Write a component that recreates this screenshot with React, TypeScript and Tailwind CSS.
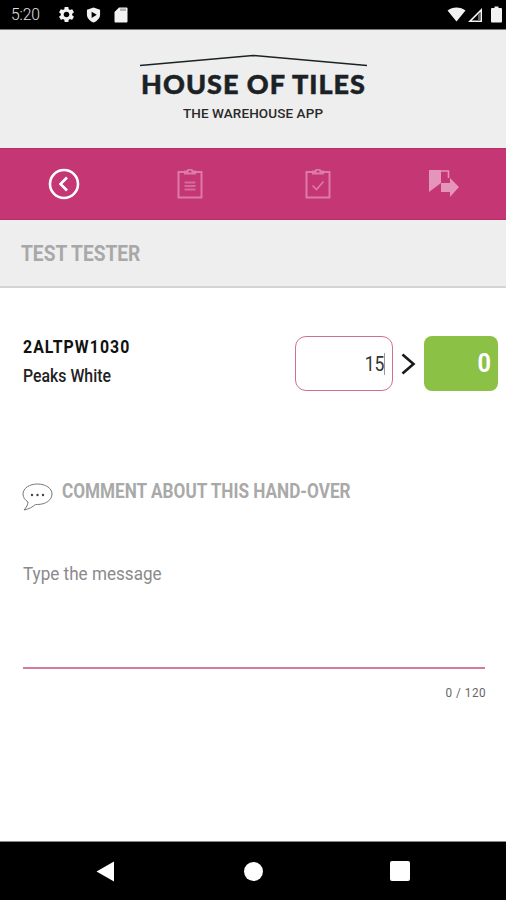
function StatusBar() {
  return (
    <div className="h-[30px] bg-black border-b border-[#777] flex items-center justify-between pl-[11px] pr-[4px] text-[#e0e0e0]">
      <div className="flex items-center">
        <span className="w-[32px] text-[17px] leading-none font-[Roboto] font-light tracking-[-0.1px] origin-left scale-x-[0.92]">5:20</span>
        {/* gear */}
        <svg width="19" height="19" viewBox="0 0 24 24" className="ml-[14px]">
          <path
            fill="#f2f2f2"
            d="M19.14 12.94c.04-.3.06-.61.06-.94 0-.32-.02-.64-.07-.94l2.03-1.58c.18-.14.23-.41.12-.61l-1.92-3.32c-.12-.22-.37-.29-.59-.22l-2.39.96c-.5-.38-1.03-.7-1.62-.94l-.36-2.54c-.04-.24-.24-.41-.48-.41h-3.84c-.24 0-.43.17-.47.41l-.36 2.54c-.59.24-1.13.57-1.62.94l-2.39-.96c-.22-.08-.47 0-.59.22L2.74 8.87c-.12.21-.08.47.12.61l2.03 1.58c-.05.3-.09.63-.09.94s.02.64.07.94l-2.03 1.58c-.18.14-.23.41-.12.61l1.92 3.32c.12.22.37.29.59.22l2.39-.96c.5.38 1.03.7 1.62.94l.36 2.54c.05.24.24.41.48.41h3.84c.24 0 .44-.17.47-.41l.36-2.54c.59-.24 1.13-.56 1.62-.94l2.39.96c.22.08.47 0 .59-.22l1.92-3.32c.12-.22.07-.47-.12-.61l-2.01-1.58zM12 15.6c-1.98 0-3.6-1.62-3.6-3.6s1.62-3.6 3.6-3.6 3.6 1.62 3.6 3.6-1.62 3.6-3.6 3.6z"
          />
        </svg>
        {/* play protect shield */}
        <svg width="15" height="16" viewBox="0 0 16 17" className="ml-[10px]">
          <path d="M8 0.5 L15 3 V8 C15 12 12 15 8 16.5 C4 15 1 12 1 8 V3 Z" fill="#f2f2f2" />
          <path d="M6 5 L11.5 8.3 L6 11.6 Z" fill="#000" />
        </svg>
        {/* sd card */}
        <svg width="14" height="16" viewBox="0 0 14 16" className="ml-[13px]">
          <path d="M5 0.5 H12.5 A1 1 0 0 1 13.5 1.5 V14.5 A1 1 0 0 1 12.5 15.5 H1.5 A1 1 0 0 1 0.5 14.5 V5 Z" fill="#f2f2f2" />
          <path d="M7 1.5 V4 M9 1.5 V4 M11 1.5 V4" stroke="#555" strokeWidth="0.8" />
        </svg>
      </div>
      <div className="flex items-center">
        <svg width="19" height="15" viewBox="0 0 19 15">
          <path d="M0.5 3.5 C5.5 -0.5 13.5 -0.5 18.5 3.5 L9.5 14.5 Z" fill="#f2f2f2" />
        </svg>
        <svg width="16" height="16" viewBox="0 0 16 16" className="ml-[1px]">
          <path d="M15 1 V15 H1 Z M13.4 5 L4.8 13.6 H13.4 Z" fill="#f2f2f2" fillRule="evenodd" />
          <path d="M11 8 V13.6 H13.4 V5 Z" fill="#666" />
        </svg>
        <svg width="11" height="17" viewBox="0 0 11 17" className="ml-[8px]">
          <path d="M3.5 0.5 H7.5 V2 H10 A1 1 0 0 1 11 3 V15.5 A1 1 0 0 1 10 16.5 H1 A1 1 0 0 1 0 15.5 V3 A1 1 0 0 1 1 2 H3.5 Z" fill="#f2f2f2" />
        </svg>
      </div>
    </div>
  );
}

function Logo() {
  return (
    <div className="h-[118px] bg-[#eeeeee] flex flex-col items-center">
      <svg width="230" height="14" viewBox="0 0 230 14" className="mt-[24px] ml-[2px]">
        <path d="M1 11.5 L114 1.5 L228 11.5" fill="none" stroke="#1b2226" strokeWidth="1.5" />
      </svg>
      <div className="mt-[1px] ml-[1px] text-[27px] leading-[30px] font-black font-[Lato] text-[#1b2226] tracking-[1px] whitespace-nowrap [-webkit-text-stroke:0.5px_#1b2226]">
        HOUSE OF TILES
      </div>
      <div className="mt-[6px] text-[13.5px] leading-[16px] font-medium font-[Roboto] text-[#2a2a2a] tracking-[0.1px] whitespace-nowrap">
        THE WAREHOUSE APP
      </div>
    </div>
  );
}

function ClipboardIcon({ done }: { done?: boolean }) {
  return (
    <svg width="26" height="30" viewBox="0 0 26 30" fill="none" stroke="#dd7ba8" strokeWidth="2">
      <path d="M8 3 H1.5 V28.5 H24.5 V3 H18" />
      <path d="M8 4.5 V2.5 H10.5 A2.5 2 0 0 1 15.5 2.5 H18 V4.5 Z" />
      {done ? (
        <path d="M7.5 16.5 L11.5 20.5 L18.5 12.5" strokeWidth="1.6" />
      ) : (
        <path d="M7.5 13.5 H18.5 M7.5 17 H18.5 M7.5 20.5 H18.5" strokeWidth="1.8" stroke="#d56a9c" />
      )}
    </svg>
  );
}

function StepBar() {
  return (
    <div className="h-[72px] bg-[#c43674] border-y border-[#bf2a6b] grid grid-cols-4 items-center">
      <div className="flex justify-center pl-[2px]">
        <svg width="32" height="32" viewBox="0 0 32 32" fill="none" stroke="#fff">
          <circle cx="16" cy="16" r="14" strokeWidth="2.6" />
          <path d="M19 9.5 L12.5 16 L19 22.5" strokeWidth="2.6" />
        </svg>
      </div>
      <div className="flex justify-center pl-[1px]">
        <ClipboardIcon />
      </div>
      <div className="flex justify-center pl-[3px]">
        <ClipboardIcon done />
      </div>
      <div className="flex justify-center pl-[3px]">
        <svg width="30" height="28" viewBox="0 0 30 28">
          <path d="M0 0 H12 V13 L0 22 Z" fill="#e594ba" />
          <path d="M12 1 H19.5 V8" fill="none" stroke="#e594ba" strokeWidth="1.6" />
          <path d="M12 13 H21 V8 L30 17 L21 27 V22 H12 Z" fill="#e594ba" />
        </svg>
      </div>
    </div>
  );
}

export default function App() {
  return (
    <div className="w-[506px] h-[900px] bg-white flex flex-col overflow-hidden font-[Roboto]">
      <StatusBar />
      <Logo />
      <StepBar />
      <div className="h-[68px] bg-[#eeeeee] border-b-2 border-[#d4d4d4] pl-[21px] pt-[21px]">
        <div className="text-[22px] leading-[26px] font-bold text-[#a8a8a8] origin-left scale-x-[0.87]">TEST TESTER</div>
      </div>

      <div className="flex-1 flex flex-col">
        {/* item row */}
        <div className="flex items-start justify-between pl-[23px] pr-[8px] mt-[48px]">
          <div>
            <div className="text-[18px] leading-[22px] font-bold text-[#111] tracking-[1.2px] origin-left scale-x-[0.88]">2ALTPW1030</div>
            <div className="mt-[8px] text-[18px] leading-[20px] font-medium text-[#222] origin-left scale-x-[0.88]">Peaks White</div>
          </div>
          <div className="flex items-center">
            <div className="w-[98px] h-[55px] rounded-[11px] border-[1.5px] border-[#d0708f] flex items-center justify-end pr-[7px]">
              <span className="text-[20px] leading-none text-[#333] origin-right scale-x-[0.88]">15</span>
              <span className="w-px h-[22px] bg-[#999]" />
            </div>
            <svg width="31" height="24" viewBox="0 0 31 24" fill="none" stroke="#1a1a1a" strokeWidth="2.6">
              <path d="M9.5 2.5 L20.5 12 L9.5 21.5" />
            </svg>
            <div className="w-[74px] h-[55px] rounded-[8px] bg-[#8bc145] flex items-center justify-end pr-[7px] text-[26px] font-bold text-white">
              <span className="origin-right scale-x-[0.9]">0</span>
            </div>
          </div>
        </div>

        {/* comment heading */}
        <div className="flex items-start pl-[22px] mt-[89px]">
          <svg width="31" height="28" viewBox="0 0 31 28" fill="none" stroke="#777" strokeWidth="1" className="mt-[3px]">
            <path d="M15.5 1 C7.5 1 1 5.2 1 11 C1 14.5 3 17 6 19 C6 21.5 4.5 24 2 27 C7 26 10.5 24 13.5 21.5 C14.2 21.5 14.8 21.5 15.5 21.5 C23.5 21.5 30 17 30 11 C30 5.2 23.5 1 15.5 1 Z" />
            <circle cx="10" cy="12" r="1.2" fill="#444" stroke="none" />
            <circle cx="15.5" cy="12" r="1.2" fill="#444" stroke="none" />
            <circle cx="21" cy="12" r="1.2" fill="#444" stroke="none" />
          </svg>
          <div className="ml-[9px] text-[19.5px] leading-[24px] font-bold text-[#a9a9a9] whitespace-nowrap origin-left scale-x-[0.88]">
            COMMENT ABOUT THIS HAND-OVER
          </div>
        </div>

        {/* message field */}
        <div className="ml-[23px] mr-[21px] mt-[51px] h-[107px] border-b-2 border-b-[#d8799f]">
          <div className="text-[19px] leading-[24px] text-[#8a8a8a] origin-left scale-x-[0.9]">Type the message</div>
        </div>
        <div className="mt-[16px] pr-[22px] text-right text-[13px] leading-[16px] text-[#666] tracking-[0.6px] origin-right scale-x-[0.9]">0 / 120</div>
      </div>

      {/* nav bar */}
      <div className="h-[59px] bg-black border-t border-[#888] grid grid-cols-[197px_200px_1fr] items-center">
        <svg width="19" height="21" viewBox="0 0 19 21" className="ml-[96px]"><path d="M18 0.5 V20.5 L0.5 10.5 Z" fill="#fff" /></svg>
        <div className="w-[19px] h-[19px] rounded-full bg-white ml-[47px]" />
        <div className="w-[20px] h-[20px] rounded-[2px] bg-white ml-[-7px]" />
      </div>
    </div>
  );
}
